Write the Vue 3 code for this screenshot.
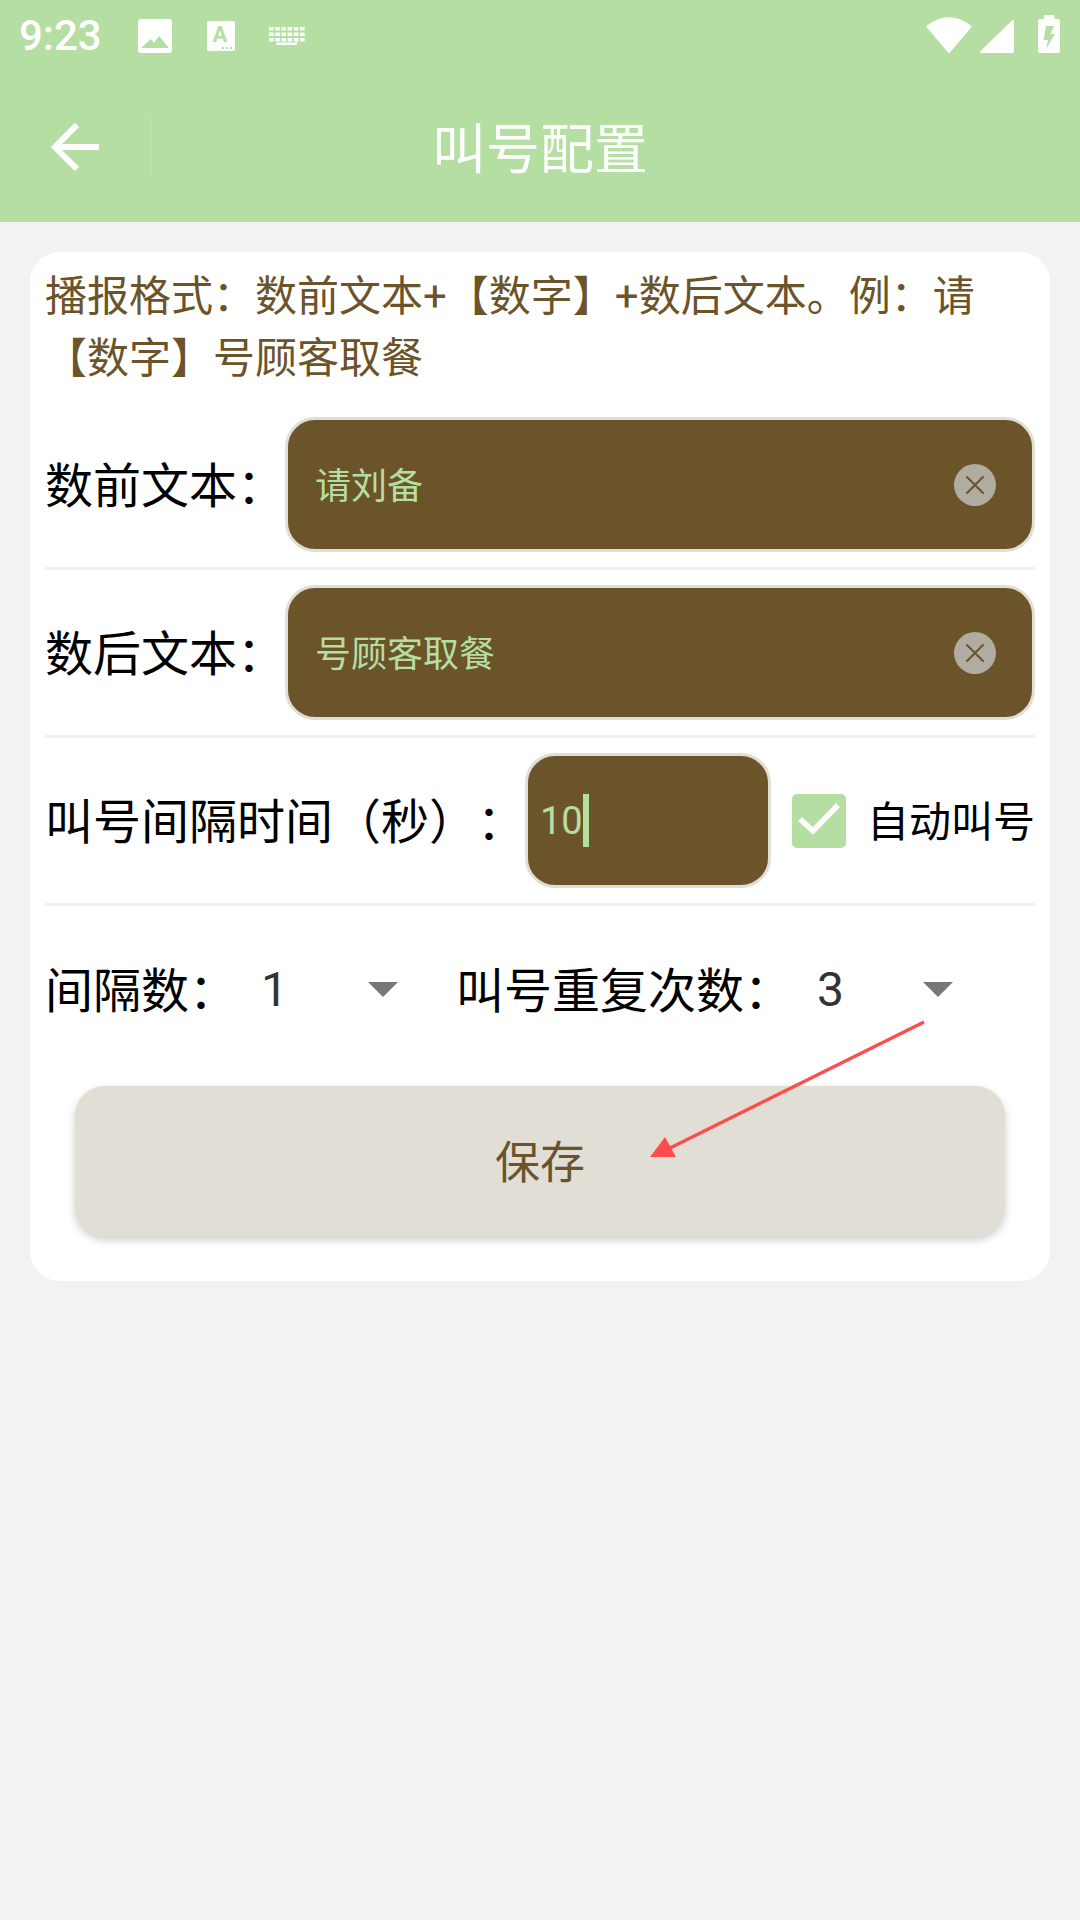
<template>
  <div class="page">
    <div class="status-bar">
      <span class="time">9:23</span>
      <svg class="ic-image" viewBox="0 0 34 34">
        <path fill="#fff" fill-rule="evenodd" d="M3 0h28a3 3 0 0 1 3 3v28a3 3 0 0 1-3 3H3a3 3 0 0 1-3-3V3a3 3 0 0 1 3-3zM3 29h28L21 17l-5 7-3-4z" />
      </svg>
      <svg class="ic-a" viewBox="0 0 28 30">
        <rect width="28" height="30" rx="2" fill="#fff" />
        <text x="13" y="21" text-anchor="middle" class="ic-a-letter">A</text>
        <circle cx="16" cy="27" r="1.200" fill="#b5dea3" />
        <circle cx="20" cy="27" r="1.200" fill="#b5dea3" />
        <circle cx="24" cy="27" r="1.200" fill="#b5dea3" />
      </svg>
      <svg class="ic-keyboard" viewBox="0 0 36 18" fill="#fff">
        <rect v-for="k in keys" :key="k.x + '-' + k.y" :x="k.x" :y="k.y" :width="k.w" height="3.500" />
        <rect x="7" y="15.500" width="21" height="2.500" />
      </svg>
      <div class="status-right">
        <svg class="ic-wifi" viewBox="0 0 46 36">
          <path fill="#fff" stroke="#fff" stroke-width="2" stroke-linejoin="round" d="M23 35 1.500 9.500Q23-7 44.500 9.500z" />
        </svg>
        <svg class="ic-signal" viewBox="0 0 34 33">
          <path fill="#fff" stroke="#fff" stroke-width="2" stroke-linejoin="round" d="M33 1v31H1z" />
        </svg>
        <svg class="ic-battery" viewBox="0 0 22 38">
          <path fill="#fff" fill-rule="evenodd" d="M6 0h10.500v4H20a2 2 0 0 1 2 2v30a2 2 0 0 1-2 2H2a2 2 0 0 1-2-2V6a2 2 0 0 1 2-2h4zM8 11l-2.500 14H10l-2 9 9-15h-4.500L16 11z" />
        </svg>
      </div>
    </div>

    <header class="toolbar">
      <svg class="back" viewBox="0 0 48 48" fill="none" stroke="#fff" stroke-width="6">
        <path d="M48 24H4" />
        <path d="M26 2 4 24l22 22" />
      </svg>
      <span class="toolbar-line"></span>
      <h1 class="title">叫号配置</h1>
    </header>

    <section class="card">
      <p class="hint">播报格式&#xFF1A;数前文本+【数字】+数后文本。例&#xFF1A;请【数字】号顾客取餐</p>

      <div v-for="item in textFields" :key="item.label" class="row">
        <span class="label">{{ item.label }}</span>
        <div class="field field-grow">
          <span class="field-text">{{ item.value }}</span>
          <svg class="clear" viewBox="0 0 42 42">
            <circle cx="21" cy="21" r="21" fill="#b0aca2" />
            <path d="M13 13l16 16M29 13 13 29" stroke="#6b532a" stroke-width="2" stroke-linecap="round" />
          </svg>
        </div>
      </div>

      <div class="row">
        <span class="label">叫号间隔时间&#xFF08;秒&#xFF09;&#xFF1A;</span>
        <div class="field field-small">
          <span class="field-text">10</span>
          <span class="caret"></span>
        </div>
        <span class="checkbox">
          <svg viewBox="0 0 54 54" fill="none">
            <path d="M8 25l13 12 25-26" stroke="#fff" stroke-width="5.500" />
          </svg>
        </span>
        <span class="check-label">自动叫号</span>
      </div>

      <div class="select-row">
        <span class="label">间隔数&#xFF1A;</span>
        <span class="select-value first">1</span>
        <span class="drop"></span>
        <span class="label second">叫号重复次数&#xFF1A;</span>
        <span class="select-value">3</span>
        <span class="drop"></span>
      </div>

      <button class="save" type="button">保存</button>
    </section>

    <!-- red annotation drawn over the screen -->
    <svg class="note" viewBox="0 0 1080 1920">
      <path d="M924 1022 666 1150" stroke="#ff4d4d" stroke-width="3.500" fill="none" />
      <path d="M665 1137 650 1157h26z" fill="#ff4d4d" />
    </svg>
  </div>
</template>

<script setup>
const textFields = [
  { label: '数前文本\uFF1A', value: '请刘备' },
  { label: '数后文本\uFF1A', value: '号顾客取餐' }
]

// keyboard icon, three rows of small keys
const keys = []
for (let y = 0; y < 3; y++) {
  for (let i = 0; i < 6; i++) {
    keys.push({ x: i * 6.2, y: y * 5.5, w: 4.6 })
  }
}
</script>

<style scoped>
.page {
  position: relative;
  width: 1080px;
  min-height: 1920px;
  background: #f2f2f4;
  font-family: Roboto, "Noto Sans CJK SC", sans-serif;
  text-spacing-trim: space-all;
  overflow: hidden;
}

.status-bar {
  display: flex;
  align-items: center;
  height: 72px;
  padding: 0 20px 0 19px;
  box-sizing: border-box;
  background: #b5dea3;
  color: #fff;
}

.time {
  font-size: 42px;
  font-weight: 500;
  line-height: 72px;
  width: 119px;
}

.ic-image {
  width: 34px;
  height: 34px;
  margin-right: 35px;
}

.ic-a {
  width: 28px;
  height: 30px;
  margin-right: 34px;
}

.ic-a-letter {
  font-size: 22px;
  font-weight: 700;
  fill: #b5dea3;
}

.ic-keyboard {
  width: 36px;
  height: 18px;
}

.status-right {
  display: flex;
  align-items: flex-end;
  height: 38px;
  margin-left: auto;
  margin-top: -4px;
}

.ic-wifi {
  width: 46px;
  height: 36px;
  margin-right: 8px;
}

.ic-signal {
  width: 34px;
  height: 33px;
  margin-right: 24px;
}

.ic-battery {
  width: 22px;
  height: 38px;
}

.toolbar {
  position: relative;
  display: flex;
  align-items: center;
  height: 150px;
  background: #b5dea3;
}

.back {
  width: 48px;
  height: 48px;
  margin-left: 51px;
}

.toolbar-line {
  width: 1px;
  height: 60px;
  margin-left: 51px;
  background: #c8e6ba;
}

.title {
  position: absolute;
  left: 0;
  right: 0;
  margin: 0 0 4px;
  text-align: center;
  font-size: 54px;
  font-weight: 400;
  color: #fff;
}

.card {
  width: 1020px;
  margin: 30px 30px 0;
  padding: 14px 15px 45px;
  box-sizing: border-box;
  background: #fff;
  border-radius: 30px;
}

.hint {
  margin: 0 0 12px;
  font-size: 42px;
  line-height: 62px;
  color: #6b532a;
}

.row {
  display: flex;
  align-items: center;
  padding: 15px 0;
  border-bottom: 3px solid #f1f1f1;
}

.label {
  flex-shrink: 0;
  font-size: 48px;
  color: #000;
  white-space: nowrap;
  margin-bottom: 4px;
}

.row .label {
  margin-bottom: 6px;
}

.field {
  display: flex;
  align-items: center;
  height: 135px;
  box-sizing: border-box;
  border: 3px solid #e0ded5;
  border-radius: 30px;
  background: #6b532a;
  color: #b5dea3;
  font-size: 36px;
}

.field-grow {
  flex: 1;
  padding: 0 36px 0 27px;
}

.field-small {
  flex-shrink: 0;
  width: 246px;
  padding-left: 12px;
}

.field-text {
  flex: 1;
  margin-bottom: 4px;
}

.field-small .field-text {
  flex: none;
  font-size: 38px;
  margin-bottom: 0;
}

.clear {
  width: 42px;
  height: 42px;
}

.caret {
  width: 6px;
  height: 53px;
  background: #b5dea3;
}

.checkbox {
  flex-shrink: 0;
  width: 54px;
  height: 54px;
  margin-left: 21px;
  border-radius: 5px;
  background: #b5dea3;
}

.checkbox svg {
  display: block;
}

.check-label {
  margin-left: 21px;
  margin-bottom: 4px;
  font-size: 42px;
  color: #000;
  white-space: nowrap;
}

.select-row {
  display: flex;
  align-items: center;
  height: 166px;
}

.select-value {
  width: 106px;
  margin-left: 25px;
  font-size: 48px;
  color: #333;
}

.select-value.first {
  margin-left: 24px;
  width: 107px;
}

.drop {
  width: 0;
  height: 0;
  border-left: 15px solid transparent;
  border-right: 15px solid transparent;
  border-top: 15px solid #777;
}

.second {
  margin-left: 58px;
}

.save {
  display: block;
  width: 930px;
  height: 150px;
  margin: 14px auto 0;
  padding: 0 0 4px;
  border: none;
  border-radius: 30px;
  background: #e0ded5;
  box-shadow: 0 4px 10px rgba(0, 0, 0, 0.2);
  color: #6b532a;
  font-family: inherit;
  font-size: 45px;
}

.note {
  position: absolute;
  left: 0;
  top: 0;
  width: 1080px;
  height: 1920px;
  pointer-events: none;
}
</style>
